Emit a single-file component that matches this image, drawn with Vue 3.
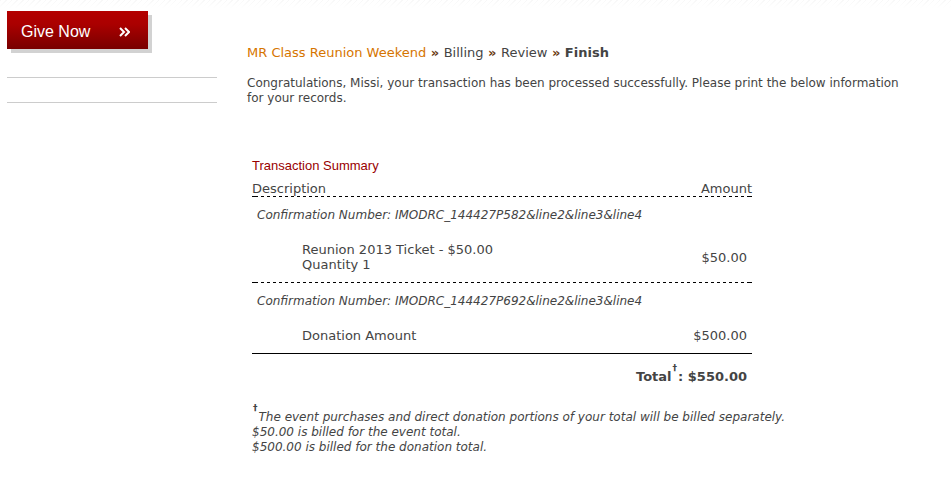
<script setup>
const items = [
  {
    confirmation: 'IMODRC_144427P582&line2&line3&line4',
    lines: ['Reunion 2013 Ticket - $50.00', 'Quantity 1'],
    amount: '$50.00',
  },
  {
    confirmation: 'IMODRC_144427P692&line2&line3&line4',
    lines: ['Donation Amount'],
    amount: '$500.00',
  },
]
</script>

<template>
  <div class="page">
    <aside class="sidebar">
      <a class="give" href="#give">
        <span>Give Now</span>
        <svg class="chevrons" width="11" height="10" viewBox="0 0 11 10" aria-hidden="true">
          <path d="M1 1l4 4-4 4M6 1l4 4-4 4" />
        </svg>
      </a>
      <hr class="rule" />
      <hr class="rule" />
    </aside>

    <main class="content">
      <nav class="steps">
        <a href="#event">MR Class Reunion Weekend</a>
        <b class="sep"> » </b><span>Billing</span>
        <b class="sep"> » </b><span>Review</span>
        <b class="sep"> » </b><strong>Finish</strong>
      </nav>
      <p class="message">
        Congratulations, Missi, your transaction has been processed successfully. Please print the below information for your records.
      </p>

      <section class="summary">
        <h2>Transaction Summary</h2>
        <table>
          <thead>
            <tr class="dashed">
              <th scope="col">Description</th>
              <th scope="col" class="amount">Amount</th>
            </tr>
          </thead>
          <tbody v-for="(item, index) in items" :key="item.confirmation">
            <tr>
              <td class="confirmation" colspan="2">Confirmation Number: {{ item.confirmation }}</td>
            </tr>
            <tr class="item" :class="index < items.length - 1 ? 'dashed' : 'solid'">
              <td class="detail">
                <div v-for="line in item.lines" :key="line">{{ line }}</div>
              </td>
              <td class="amount">{{ item.amount }}</td>
            </tr>
          </tbody>
          <tfoot>
            <tr>
              <td class="total" colspan="2">Total<sup>†</sup>: $550.00</td>
            </tr>
          </tfoot>
        </table>
        <div class="notes">
          <sup>†</sup>The event purchases and direct donation portions of your total will be billed separately.<br />
          $50.00 is billed for the event total.<br />
          $500.00 is billed for the donation total.
        </div>
      </section>
    </main>
  </div>
</template>

<style>
body {
  margin: 0;
  background: #fff;
}
</style>

<style scoped>
.page {
  display: grid;
  grid-template-columns: 210px minmax(0, 1fr);
  column-gap: 30px;
  padding: 11px 12px 30px 7px;
  background:
    linear-gradient(transparent, #fff) 0 0 / 100% 8px no-repeat,
    repeating-linear-gradient(135deg, #f7f7f7 0 1px, #fff 1px 4px) 0 0 / 100% 8px no-repeat;
  color: #444;
  font: 13px/15px "DejaVu Sans", Verdana, sans-serif;
}
.give {
  display: flex;
  align-items: center;
  justify-content: space-between;
  box-sizing: border-box;
  width: 141px;
  height: 38px;
  margin-bottom: 28px;
  padding: 4px 18px 0 14px;
  background: linear-gradient(#b40000, #aa0000 35%, #780000);
  box-shadow: 4px 4px 0 #d2d2d2;
  color: #fff;
  font: 16px/20px "Liberation Sans", Arial, sans-serif;
  text-decoration: none;
}
.chevrons {
  fill: none;
  stroke: #fff;
  stroke-width: 2;
}
.rule {
  margin: 0 0 24px;
  border: 0;
  border-top: 1px solid #ccc;
}
.steps {
  margin-top: 34px;
}
.steps a {
  color: #d67500;
  text-decoration: none;
}
.sep {
  color: #693a10;
}
.message {
  margin: 16px 0 0;
  padding-right: 28px;
  font-size: 12px;
}
.summary {
  margin: 52px 0 0 5px;
}
h2 {
  margin: 0 0 8px;
  color: #900;
  font: 13px/15px "Liberation Sans", Arial, sans-serif;
}
table {
  width: 100%;
  max-width: 500px;
  border-collapse: separate;
  border-spacing: 0;
}
th,
td {
  padding: 0;
  text-align: left;
  font-weight: normal;
}
.dashed {
  background:
    linear-gradient(#000, #000) 0 100% / 3px 1px no-repeat,
    linear-gradient(#000, #000) 100% 100% / 2px 1px no-repeat,
    repeating-linear-gradient(90deg, transparent 0 3px, #000 3px 6px) 0 100% / 100% 1px no-repeat;
}
.dashed > * {
  border-bottom: 1px solid transparent;
}
.solid > * {
  border-bottom: 1px solid #000;
}
.confirmation {
  padding: 11px 5px 9px;
  font-size: 12px;
  font-style: italic;
}
.item .detail {
  padding: 10px 0 10px 50px;
}
.item .amount {
  padding: 10px 5px 10px 0;
}
th.amount,
td.amount,
td.total {
  text-align: right;
}
td.total {
  padding: 14px 5px 10px 0;
  font-weight: bold;
}
sup {
  padding: 0 1px;
  font-size: 9px;
  font-style: normal;
  font-weight: bold;
  line-height: 1px;
  vertical-align: 10px;
}
.notes {
  margin-top: 14px;
  font-size: 12px;
  font-style: italic;
}
</style>
